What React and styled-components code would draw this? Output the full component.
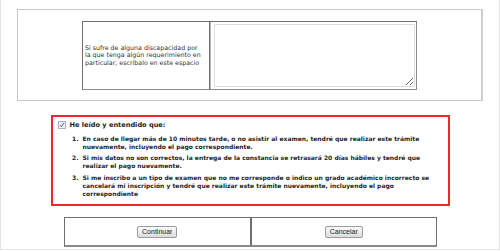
import React from "react";
import styled, { createGlobalStyle } from "styled-components";

const GlobalStyle = createGlobalStyle`
  body {
    margin: 0;
    background: #fff;
    font-family: "DejaVu Sans", Verdana, sans-serif;
  }
`;

const Page = styled.div`
  width: 500px;
  height: 250px;
  box-sizing: border-box;
  padding-top: 9px;
  border: 1px solid #e4e4e4;
  border-top: none;
  background: #fff;
`;

const Frame = styled.div`
  margin-left: 16px;
  width: 466px;
  height: 92px;
  box-sizing: border-box;
  border: 1px solid #c8c8c8;
  border-right: 2px solid #cfcfcf;
  display: flex;
  align-items: center;
  justify-content: center;
`;

const InfoTable = styled.div`
  width: 335px;
  height: 69px;
  box-sizing: border-box;
  display: grid;
  grid-template-columns: 127px 1fr;
  border: 1px solid #6f6f6f;
  border-right-color: #8a8a8a;
  border-bottom-color: #8a8a8a;
`;

const LabelCell = styled.div`
  display: flex;
  align-items: center;
  padding: 0 2px 0 2px;
  border-right: 1px solid #6f6f6f;
  font-size: 6.3px;
  line-height: 7.4px;
  white-space: nowrap;
  color: #333;
`;

const FieldCell = styled.div`
  display: flex;
  padding: 2px 1px 2px 3px;
  border-left: 1px solid #b8b8b8;
`;

const Notes = styled.textarea`
  flex: 1;
  margin: 0;
  border: 1px solid #dedede;
  border-radius: 1px;
  background: #fff;
  resize: both;
  outline: none;
`;

const Terms = styled.div`
  margin: 14px auto 0;
  width: 399px;
  box-sizing: border-box;
  border: 2px solid #f0282c;
  padding: 4px 6px 6px 5px;
  font-weight: bold;
  font-size: 6px;
  white-space: nowrap;
  color: #1e1e28;
`;

const CheckRow = styled.label`
  display: flex;
  align-items: center;
  gap: 4px;
  font-size: 6.6px;
  line-height: 8px;
`;

const Box = styled.span`
  width: 6px;
  height: 6px;
  border: 1px solid #aeb2c4;
  background: #eef0f6;
  display: flex;
  align-items: center;
  justify-content: center;
`;

const Steps = styled.ol`
  margin: 6px 0 0;
  padding-left: 23px;
  line-height: 8px;
`;

const Step = styled.li`
  padding-left: 2px;
  margin-bottom: ${({ $gap }) => $gap}px;
`;

const Actions = styled.div`
  margin: 11px auto 0;
  width: 373px;
  height: 30px;
  box-sizing: border-box;
  display: grid;
  grid-template-columns: 1fr 1fr;
  border: 1px solid #6f6f6f;
  border-bottom: 2px solid #8a8a8a;
`;

const ActionCell = styled.div`
  display: flex;
  align-items: center;
  justify-content: center;
  border-left: ${({ $divider }) => ($divider ? "2px solid #6f6f6f" : "none")};
`;

const Button = styled.button`
  height: 12px;
  padding: 0 4px;
  border: 1px solid #9c9c9c;
  border-radius: 2px;
  background: linear-gradient(#fbfbfb, #dcdcdc);
  font-family: "Liberation Sans", Arial, sans-serif;
  font-size: 7px;
  line-height: 10px;
  color: #222;
`;

const Tick = () => (
  <svg width="6" height="6" viewBox="0 0 6 6">
    <path d="M1 3.2 L2.4 4.6 L5 1" fill="none" stroke="#3b4fa8" strokeWidth="0.9" />
  </svg>
);

const App = () => {
  return (
    <Page>
      <GlobalStyle />
      <Frame>
        <InfoTable>
          <LabelCell>
            Si sufre de alguna discapacidad por
            <br />
            la que tenga algún requerimiento en
            <br />
            particular, escríbalo en este espacio
          </LabelCell>
          <FieldCell>
            <Notes />
          </FieldCell>
        </InfoTable>
      </Frame>

      <Terms>
        <CheckRow>
          <Box>
            <Tick />
          </Box>
          He leído y entendido que:
        </CheckRow>
        <Steps>
          <Step $gap={3}>
            En caso de llegar más de 10 minutos tarde, o no asistir al examen, tendré que realizar este trámite
            <br />
            nuevamente, incluyendo el pago correspondiente.
          </Step>
          <Step $gap={4}>
            Si mis datos no son correctos, la entrega de la constancia se retrasará 20 días hábiles y tendré que
            <br />
            realizar el pago nuevamente.
          </Step>
          <Step $gap={0}>
            Si me inscribo a un tipo de examen que no me corresponde o indico un grado académico incorrecto se
            <br />
            cancelará mi inscripción y tendré que realizar este trámite nuevamente, incluyendo el pago
            <br />
            correspondiente
          </Step>
        </Steps>
      </Terms>

      <Actions>
        <ActionCell>
          <Button>Continuar</Button>
        </ActionCell>
        <ActionCell $divider>
          <Button>Cancelar</Button>
        </ActionCell>
      </Actions>
    </Page>
  );
};

export default App;
